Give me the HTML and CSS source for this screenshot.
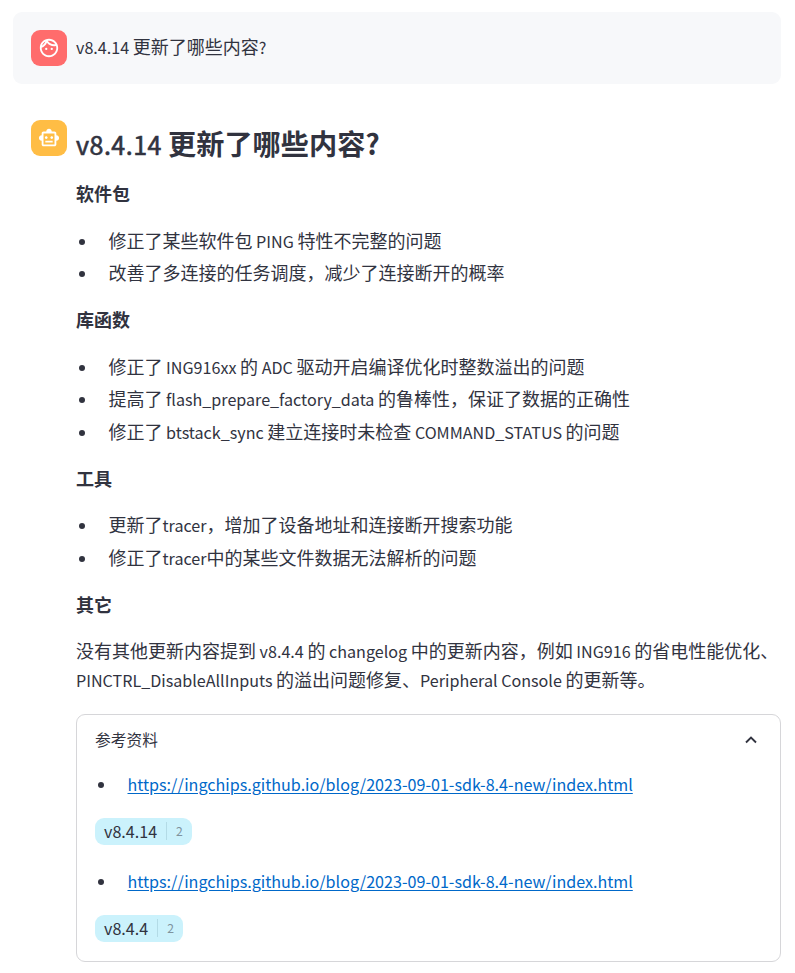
FILE: index.html
```html
<!DOCTYPE html>
<html lang="zh-CN">
<head>
<meta charset="utf-8">
<title>v8.4.14</title>
<link rel="stylesheet" href="styles.css">
</head>
<body>
<main class="chat">
  <section class="message message-user">
    <div class="avatar avatar-user">
      <svg viewBox="0 0 24 24" width="22" height="22" fill="#fff"><path d="M10.25 13a1.25 1.25 0 1 1-2.5 0 1.25 1.25 0 0 1 2.5 0zM15 11.750a1.25 1.25 0 1 0 0 2.500 1.25 1.25 0 0 0 0-2.500zm7 .25c0 5.520-4.480 10-10 10S2 17.520 2 12 6.480 2 12 2s10 4.480 10 10zM10.660 4.120C12.060 6.440 14.600 8 17.500 8c.46 0 .91-.05 1.340-.12C17.440 5.560 14.900 4 12 4c-.46 0-.91.05-1.340.12zM4.420 9.470c1.710-.97 3.030-2.550 3.660-4.440-1.710.97-3.030 2.550-3.660 4.440zM20 12c0-.78-.12-1.530-.33-2.240-.7.150-1.420.240-2.170.240-3.130 0-5.920-1.440-7.760-3.690C8.690 8.870 6.600 10.880 4 11.860c.01.040 0 .09 0 .14 0 4.410 3.590 8 8 8s8-3.590 8-8z"/></svg>
    </div>
    <div class="content"><p><span class="en">v8.4.14 </span>更新了哪些内容<span class="en">?</span></p></div>
  </section>
  <section class="message">
    <div class="avatar avatar-bot">
      <svg viewBox="0 0 24 24" width="22" height="22" fill="#fff"><path d="M20 9V7c0-1.100-.9-2-2-2h-3c0-1.660-1.340-3-3-3S9 3.340 9 5H6c-1.100 0-2 .9-2 2v2c-1.660 0-3 1.340-3 3s1.340 3 3 3v4c0 1.100.9 2 2 2h12c1.100 0 2-.9 2-2v-4c1.660 0 3-1.340 3-3s-1.340-3-3-3zm-2 10H6V7h12v12zm-9-6c-.83 0-1.500-.67-1.500-1.500S8.170 10 9 10s1.500.67 1.500 1.500S9.830 13 9 13zm7.500-1.500c0 .83-.67 1.500-1.500 1.500s-1.500-.67-1.500-1.500.67-1.500 1.500-1.500 1.500.67 1.500 1.500zM8 15h8v2H8v-2z"/></svg>
    </div>
    <div class="content">
      <h1><span class="version">v8.4.14 </span>更新了哪些内容?</h1>
      <h2>软件包</h2>
      <ul>
        <li>修正了某些软件包<span class="en"> PING </span>特性不完整的问题</li>
        <li>改善了多连接的任务调度，减少了连接断开的概率</li>
      </ul>
      <h2>库函数</h2>
      <ul>
        <li>修正了<span class="en"> ING916xx </span>的<span class="en"> ADC </span>驱动开启编译优化时整数溢出的问题</li>
        <li>提高了<span class="en"> flash_prepare_factory_data </span>的鲁棒性，保证了数据的正确性</li>
        <li>修正了<span class="en"> btstack_sync </span>建立连接时未检查<span class="en"> COMMAND_STATUS </span>的问题</li>
      </ul>
      <h2>工具</h2>
      <ul>
        <li>更新了<span class="en">tracer</span>，增加了设备地址和连接断开搜索功能</li>
        <li>修正了<span class="en">tracer</span>中的某些文件数据无法解析的问题</li>
      </ul>
      <h2>其它</h2>
      <p>没有其他更新内容提到<span class="en"> v8.4.4 </span>的<span class="en"> changelog </span>中的更新内容，例如<span class="en"> ING916 </span>的省电性能优化、<br><span class="en">PINCTRL_DisableAllInputs </span>的溢出问题修复、<span class="en">Peripheral Console </span>的更新等。</p>
      <div class="card">
        <div class="card-head">
          <span>参考资料</span>
          <svg class="chevron" viewBox="0 0 18 18" width="18" height="18"><path d="M4 11.500 9 6.500l5 5" fill="none" stroke="#31333f" stroke-width="1.900"/></svg>
        </div>
        <ul><li><a class="en" href="#">https://ingchips.github.io/blog/2023-09-01-sdk-8.4-new/index.html</a></li></ul>
        <div class="tag"><span class="tag-name">v8.4.14</span><span class="tag-count">2</span></div>
        <ul><li><a class="en" href="#">https://ingchips.github.io/blog/2023-09-01-sdk-8.4-new/index.html</a></li></ul>
        <div class="tag"><span class="tag-name">v8.4.4</span><span class="tag-count">2</span></div>
      </div>
    </div>
  </section>
</main>
</body>
</html>
```
FILE: styles.css
```css
* { box-sizing: border-box; }
body {
  margin: 0;
  background: #fff;
  color: #31333f;
  font: 18px/28.8px "Noto Sans CJK SC", sans-serif;
}
p, ul, h1, h2 { margin: 0; }
.chat {
  width: 768px;
  margin: 12px 0 0 13px;
  display: flex;
  flex-direction: column;
  gap: 18px;
}
.message { display: flex; gap: 9px; padding: 18px; border-radius: 9px; }
.message:not(.message-user) { padding-right: 0; }
.message-user { background: #f7f8fa; }
.avatar {
  width: 36px;
  height: 36px;
  flex: none;
  display: flex;
  align-items: center;
  justify-content: center;
  border-radius: 9px;
}
.avatar-user { background: #ff6c6c; }
.avatar-bot { background: #ffbd45; }
.content { flex: 1; min-width: 0; white-space: nowrap; }
.message-user .content { padding-top: 2px; }
.en { font-size: .895em; line-height: 1; }
h1 { font-size: 28.2px; line-height: 36px; font-weight: 700; padding-top: 5px; height: 59.3px; }
.version { font-size: 25px; font-weight: 400; line-height: 1; letter-spacing: .5px; -webkit-text-stroke: .6px #31333f; }
h2 { font-size: 18px; line-height: 28.8px; margin-bottom: 18px; }
ul { list-style: none; padding: 0; margin-bottom: 18px; }
li { display: flow-root; position: relative; padding-left: 32.5px; }
li + li { margin-top: 3.6px; }
li::before {
  content: "";
  position: absolute;
  left: 3px;
  top: 12.8px;
  width: 6px;
  height: 6px;
  border-radius: 50%;
  background: #31333f;
}
.card {
  width: 705px;
  height: 248px;
  margin-top: 20.1px;
  padding: 0 18px;
  border: 1px solid #d6d6d9;
  border-radius: 9px;
}
.card-head {
  display: flex;
  align-items: center;
  justify-content: space-between;
  height: 54px;
  padding: 0 2px 4px 0;
  font-size: 15.750px;
}
.card ul { margin: 0 0 20px; }
a { color: #0068c9; text-decoration: underline; text-underline-offset: 2px; }
.tag {
  display: flex;
  align-items: center;
  width: fit-content;
  height: 27px;
  margin-bottom: 21.2px;
  padding: 0 9px;
  border-radius: 9px;
  background: #cbf2fc;
}
.tag-name { font-size: 16.1px; }
.tag-count {
  height: 18px;
  margin-left: 9px;
  padding-left: 9px;
  border-left: 1px solid #b3dbe6;
  color: #7f939e;
  font-size: 12.2px;
  line-height: 18px;
}
```
